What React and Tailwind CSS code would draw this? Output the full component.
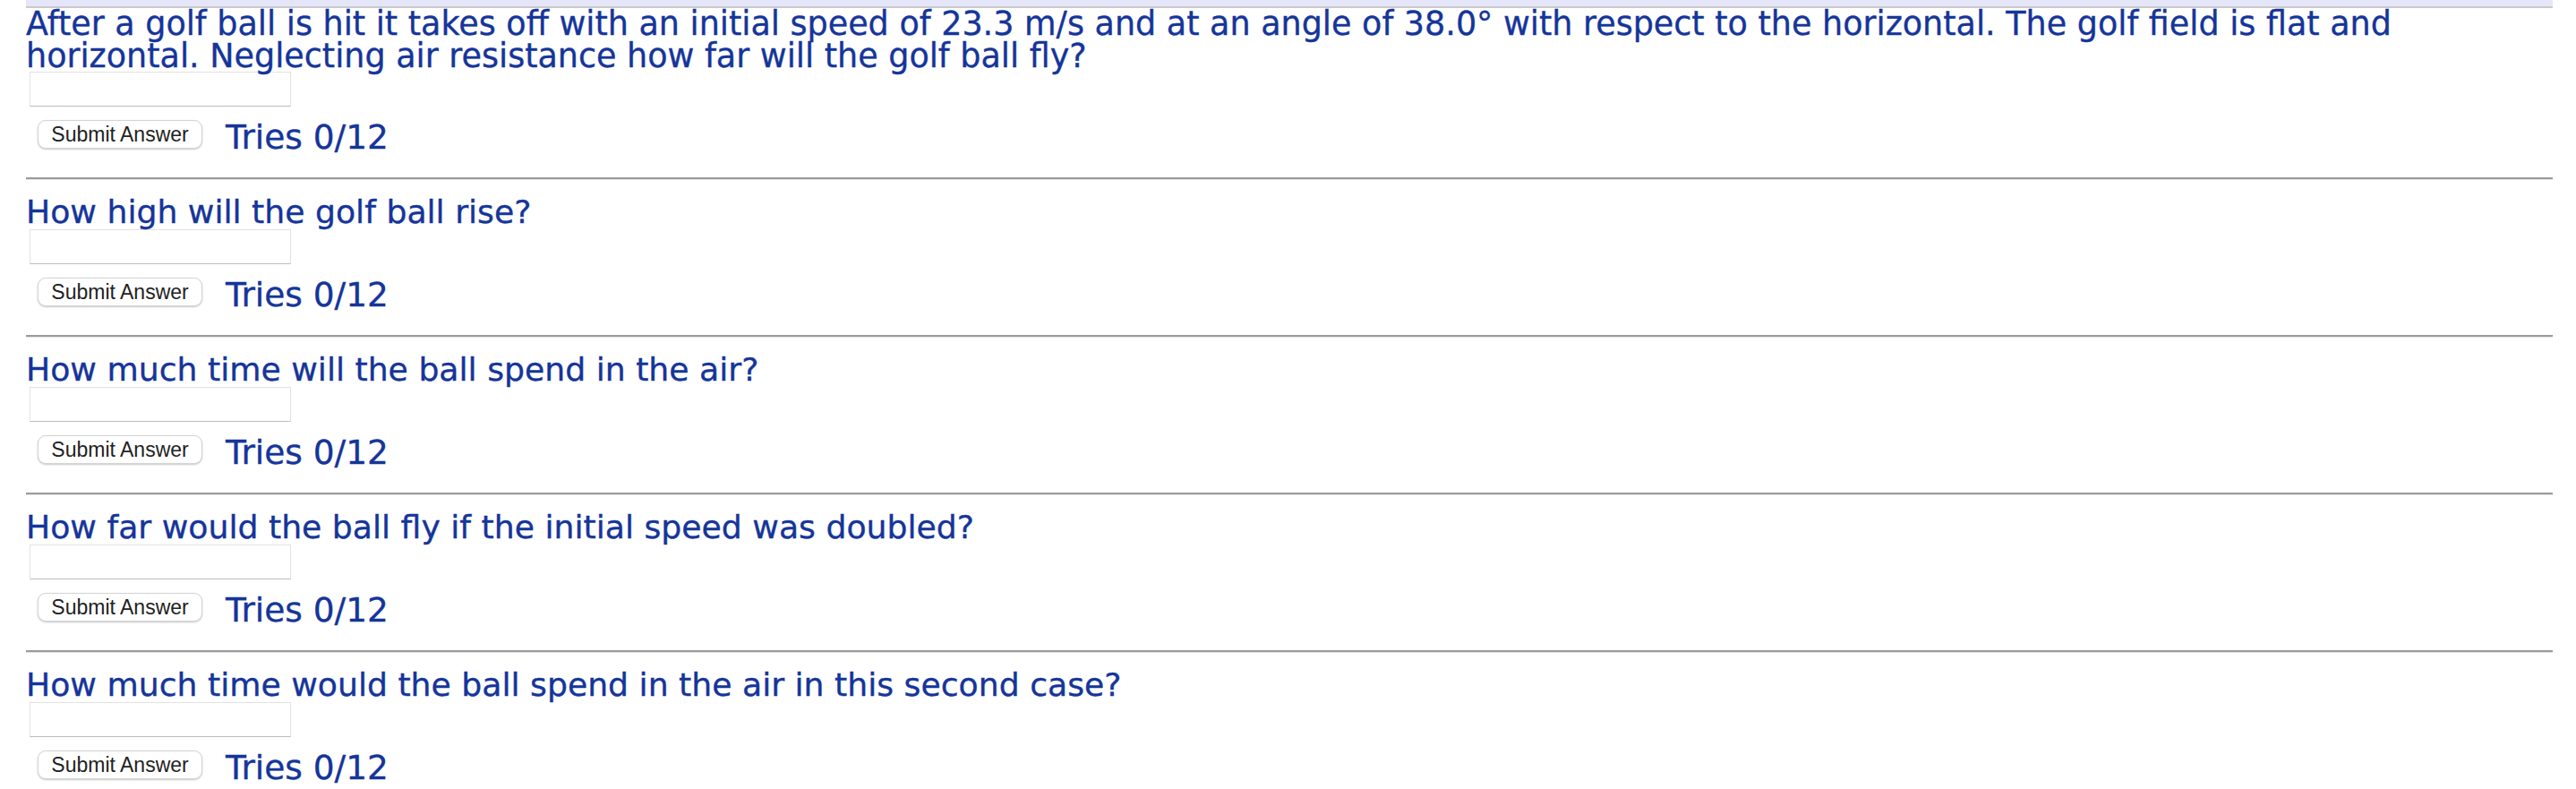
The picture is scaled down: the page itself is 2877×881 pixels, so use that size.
import React from "react";

const BLUE = "text-[#15359a] [-webkit-text-stroke:0.35px_#15359a]";

function AnswerBlock() {
  return (
    <>
      <div className="ml-[4px] h-[39px] w-[292px] border border-[#e2e2e2] border-b-[#bdbdbd] bg-white" />
      <div className="mt-[15px] flex h-[32px] items-start">
        <button
          type="button"
          className="ml-[13px] flex h-[32px] w-[184px] items-center justify-center rounded-[9px] border border-[#d4d4d4] bg-white text-[23px] leading-none text-[#222] shadow-[0_1px_2px_rgba(0,0,0,0.22)] [font-family:'Liberation_Sans',Arial,sans-serif]"
        >
          Submit Answer
        </button>
        <span className={`ml-[26px] mt-[1px] whitespace-nowrap text-[37.5px] leading-none ${BLUE}`}>
          Tries 0/12
        </span>
      </div>
    </>
  );
}

function Section({ text }) {
  return (
    <div>
      <div className="h-[3px] border-t-2 border-b border-t-[#9b9b9b] border-b-[#e4e4e4]" />
      <div className={`mt-[18px] h-[36px] text-[36.2px] leading-[36px] ${BLUE}`}>{text}</div>
      <div className="mt-[1px]">
        <AnswerBlock />
      </div>
      <div className="h-[32px]" />
    </div>
  );
}

export default function App() {
  return (
    <div className="min-h-[881px] w-[2877px] bg-white [font-family:'DejaVu_Sans',Verdana,sans-serif]">
      <div className="ml-[29px] w-[2822px]">
        <div className="h-[7px] bg-[#e6e6fa]" />
        <div className="h-[2px] bg-[#c9c9c9]" />
        <div className={`text-[36.5px] leading-[36px] ${BLUE}`}>
          After a golf ball is hit it takes off with an initial speed of 23.3 m/s and at an angle of 38.0° with respect to the horizontal. The golf field is flat and
          <br />
          horizontal. Neglecting air resistance how far will the golf ball fly?
        </div>
        <div className="-mt-[1px]">
          <AnswerBlock />
        </div>
        <div className="h-[32px]" />
        <Section text="How high will the golf ball rise?" />
        <Section text="How much time will the ball spend in the air?" />
        <Section text="How far would the ball fly if the initial speed was doubled?" />
        <Section text="How much time would the ball spend in the air in this second case?" />
      </div>
    </div>
  );
}
